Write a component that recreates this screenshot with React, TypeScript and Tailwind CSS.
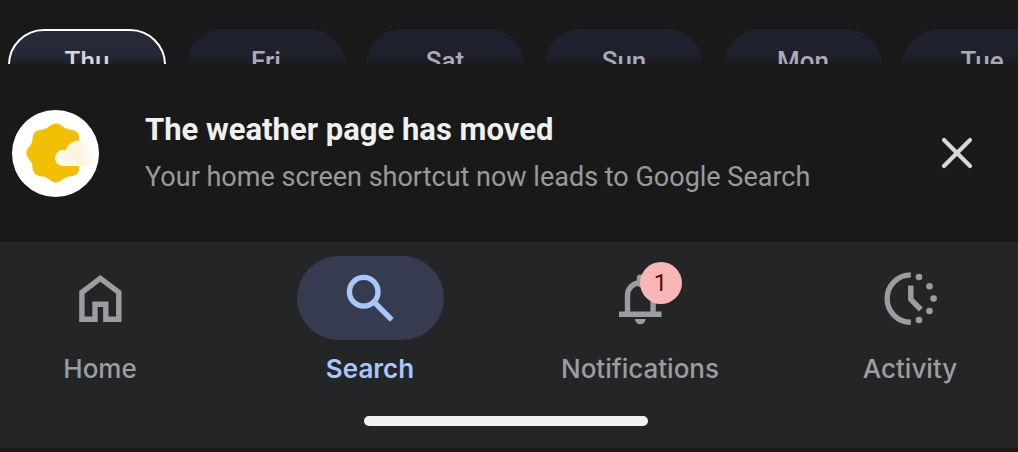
import type { ReactNode } from 'react'

const days = ['Thu', 'Fri', 'Sat', 'Sun', 'Mon', 'Tue']

// Eight-lobed sun outline around (44, 43)
const sunPath =
  Array.from({ length: 96 }, (_, i) => {
    const t = (i / 96) * Math.PI * 2
    const r = 28 + 1.6 * Math.cos(8 * t)
    return `${i === 0 ? 'M' : 'L'}${(44 + r * Math.cos(t)).toFixed(2)} ${(43 + r * Math.sin(t)).toFixed(2)}`
  }).join('') + 'Z'

function WeatherLogo() {
  return (
    <svg viewBox="0 0 87 87" className="size-[87px] shrink-0" aria-hidden="true">
      <defs>
        <linearGradient id="cloud" x1="0" y1="0.6" x2="1" y2="0.4">
          <stop offset="0" stopColor="#fffaf0" />
          <stop offset="0.5" stopColor="#fdf3da" />
          <stop offset="1" stopColor="#ffffff" />
        </linearGradient>
        <clipPath id="sun-clip">
          <rect width="67.5" height="87" />
        </clipPath>
      </defs>
      <circle cx="43.5" cy="43.5" r="43.5" fill="#fff" />
      <path d={sunPath} fill="#f2bf05" clipPath="url(#sun-clip)" />
      <path
        d="M49 56A8 8 0 1 1 53.5 40.2A14.5 14.5 0 0 1 67.5 30.5A14.5 14.5 0 0 1 81 41A8 8 0 0 1 78 56Z"
        fill="url(#cloud)"
      />
    </svg>
  )
}

function HomeIcon() {
  return (
    <svg viewBox="0 0 60 60" className="size-[60px]" fill="none" stroke="currentColor" strokeWidth="5.4" aria-hidden="true">
      <path d="M11.9 51.3V24.3L30.3 10.4L48.8 24.3V51.3H35.8V36.2H25V51.3Z" />
    </svg>
  )
}

function SearchIcon() {
  return (
    <svg viewBox="0 0 60 60" className="size-[60px]" fill="none" stroke="currentColor" strokeWidth="5.4" aria-hidden="true">
      <circle cx="23.7" cy="23.7" r="14.3" />
      <path d="M34 34L51.8 51.8" />
    </svg>
  )
}

function BellIcon() {
  return (
    <svg viewBox="0 0 60 60" className="size-[60px]" fill="none" stroke="currentColor" strokeWidth="5.4" aria-hidden="true">
      <path d="M9 46.2H51.5" />
      <path d="M17.5 46V27.5a12.8 12.8 0 0 1 25.6 0V46" />
      <path d="M30.3 15.5V10" strokeWidth="7" strokeLinecap="round" />
      <path d="M25 51H35.6a5.3 5.3 0 0 1-10.6 0Z" fill="currentColor" stroke="none" />
    </svg>
  )
}

function ActivityIcon() {
  return (
    <svg viewBox="0 0 60 60" className="size-[60px]" fill="none" stroke="currentColor" strokeWidth="5.4" aria-hidden="true">
      <path d="M30.8 6.9A23.7 23.7 0 0 0 30.8 54.3" />
      <path d="M30.8 17.5V31.5L40.8 41.5" />
      <g fill="currentColor" stroke="none">
        <circle cx="39" cy="9" r="3.3" />
        <circle cx="49.5" cy="18.2" r="3.3" />
        <circle cx="53.6" cy="30.6" r="3.3" />
        <circle cx="49.5" cy="43" r="3.3" />
        <circle cx="39" cy="52" r="3.3" />
      </g>
    </svg>
  )
}

function NavItem({ label, icon, active = false, badge }: { label: string; icon: ReactNode; active?: boolean; badge?: number }) {
  return (
    <a
      href="#"
      aria-current={active ? 'page' : undefined}
      className={`flex w-40 flex-col items-center gap-3 whitespace-nowrap ${active ? 'font-semibold text-[#a8c7fa]' : 'font-medium text-[#9c9da0]'}`}
    >
      <span className={`relative flex h-[84px] w-[147px] items-center justify-center rounded-full ${active ? 'bg-[#373b4f]' : ''}`}>
        {icon}
        {badge && (
          <span className="absolute top-1.5 right-8 flex size-[42px] items-center justify-center rounded-full bg-[#f8b6b7] font-['Roboto',sans-serif] text-2xl font-normal text-[#5c0f12]">
            {badge}
          </span>
        )}
      </span>
      <span className="font-['Inter',sans-serif] text-[26px] leading-[34px]">{label}</span>
    </a>
  )
}

export default function App() {
  return (
    <div className="overflow-hidden bg-[#191919] font-['Roboto',sans-serif]">
      <div className="flex h-16 gap-[21px] overflow-hidden pt-[29px] pl-2">
        {days.map((day, i) => (
          <button
            key={day}
            type="button"
            className={`flex h-24 w-[158px] shrink-0 justify-center rounded-[36px] bg-linear-to-b from-25% to-[#191919] to-40% text-[26px] leading-9 font-medium ${
              i === 0 ? 'border-2 border-white from-[#262a38] pt-3 text-[#d3d7e2]' : 'from-[#1e212d] pt-3.5 text-[#a9abb8]'
            }`}
          >
            {day}
          </button>
        ))}
      </div>

      <section className="flex h-[178px] items-center pr-[37px] pl-3">
        <WeatherLogo />
        <div className="ml-[46px] flex-1 pt-0.5">
          <h1 className="text-[31px] leading-[46px] font-bold text-[#f0f0f0]">The weather page has moved</h1>
          <p className="text-[27px] leading-[48px] text-[#9a9a9a]">Your home screen shortcut now leads to Google Search</p>
        </div>
        <button type="button" aria-label="Dismiss" className="flex size-12 items-center justify-center text-[#d5d8db]">
          <svg viewBox="0 0 48 48" className="size-12" fill="none" stroke="currentColor" strokeWidth="4.2" strokeLinecap="round" aria-hidden="true">
            <path d="M11 11L37 37M37 11L11 37" />
          </svg>
        </button>
      </section>

      <nav className="bg-[#242527] pt-3.5 pb-[22px]">
        <div className="flex justify-between pr-7 pl-5">
          <NavItem label="Home" icon={<HomeIcon />} />
          <NavItem label="Search" icon={<SearchIcon />} active />
          <NavItem label="Notifications" icon={<BellIcon />} badge={1} />
          <NavItem label="Activity" icon={<ActivityIcon />} />
        </div>
        <div className="flex justify-center pt-[30px] pr-1.5">
          <div className="h-2.5 w-[284px] rounded-full bg-[#f0f1f2]" />
        </div>
      </nav>
      <div className="h-1 bg-[#1b1819]" />
    </div>
  )
}
